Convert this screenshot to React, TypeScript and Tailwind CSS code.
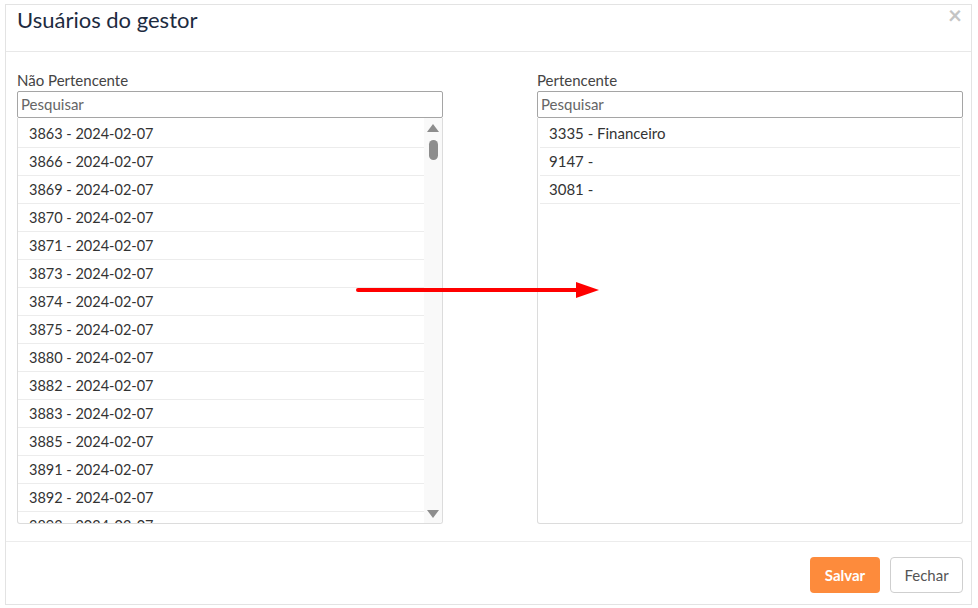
import React from "react";

const leftItems = [
  "3863 - 2024-02-07",
  "3866 - 2024-02-07",
  "3869 - 2024-02-07",
  "3870 - 2024-02-07",
  "3871 - 2024-02-07",
  "3873 - 2024-02-07",
  "3874 - 2024-02-07",
  "3875 - 2024-02-07",
  "3880 - 2024-02-07",
  "3882 - 2024-02-07",
  "3883 - 2024-02-07",
  "3885 - 2024-02-07",
  "3891 - 2024-02-07",
  "3892 - 2024-02-07",
  "3893 - 2024-02-07",
];

const rightItems = ["3335 - Financeiro", "9147 -", "3081 -"];

export default function App() {
  return (
    <div
      className="w-[978px] h-[608px] bg-white pt-[4px] pl-[5px]"
      style={{ fontFamily: "Lato, 'Open Sans', sans-serif" }}
    >
      <div className="relative w-[967px] h-[601px] border border-[#e3e3e3] flex flex-col">
        {/* Header */}
        <div className="h-[47px] border-b border-[#e8e8e8] pl-[11px] pr-[9px] flex items-start justify-between">
          <h1 className="text-[22px] leading-[26px] mt-[2px] text-[#1d2b3f]">Usuários do gestor</h1>
          <span className="text-[#c4c4c4] text-[24px] leading-[20px] font-bold mt-[0px]">×</span>
        </div>

        {/* Body */}
        <div className="h-[489px] pl-[11px] pr-[8px] pt-[19px] flex justify-between">
          {/* Left */}
          <div className="w-[426px] flex flex-col">
            <label className="text-[15px] leading-[18px] text-[#444]">Não Pertencente</label>
            <div className="h-[27px] mt-[2px] border border-[#a5a5a5] rounded-[2px] flex items-center px-[3px] text-[15px] text-[#666]">
              Pesquisar
            </div>
            <div className="h-[406px] border border-t-0 border-[#dcdcdc] rounded-b-[3px] flex overflow-hidden">
              <div className="flex-1 overflow-hidden pt-[2px]">
                {leftItems.map((t) => (
                  <div
                    key={t}
                    className="h-[28px] border-b border-[#ececec] pl-[11px] flex items-center text-[14.5px] text-[#333]"
                  >
                    {t}
                  </div>
                ))}
              </div>
              <div className="w-[18px] bg-[#f9f9f9] flex flex-col items-center justify-between pt-[6px] pb-[5px]">
                <div className="flex flex-col items-center">
                  <svg width="12" height="8" viewBox="0 0 12 8">
                    <polygon points="6,0 12,8 0,8" fill="#8d8d8d" />
                  </svg>
                  <div className="w-[9px] h-[20px] mt-[8px] rounded-full bg-[#8d8d8d]" />
                </div>
                <svg width="12" height="8" viewBox="0 0 12 8">
                  <polygon points="0,0 12,0 6,8" fill="#8d8d8d" />
                </svg>
              </div>
            </div>
          </div>

          {/* Right */}
          <div className="w-[426px] flex flex-col">
            <label className="text-[15px] leading-[18px] text-[#444]">Pertencente</label>
            <div className="h-[27px] mt-[2px] border border-[#a5a5a5] rounded-[2px] flex items-center px-[3px] text-[15px] text-[#666]">
              Pesquisar
            </div>
            <div className="h-[406px] border border-t-0 border-[#dcdcdc] rounded-b-[3px] pt-[2px] px-[2px]">
              {rightItems.map((t) => (
                <div
                  key={t}
                  className="h-[28px] border-b border-[#ececec] pl-[9px] flex items-center text-[15px] text-[#333]"
                >
                  {t}
                </div>
              ))}
            </div>
          </div>
        </div>

        {/* Footer */}
        <div className="flex-1 border-t border-[#ececec] pr-[8px] pt-[15px] flex justify-end items-start gap-[10px]">
          <button className="w-[70px] h-[36px] rounded-[4px] bg-[#fd8b3c] text-white font-bold text-[15px]">
            Salvar
          </button>
          <button className="w-[73px] h-[36px] rounded-[4px] border border-[#cfcfcf] bg-white text-[#555] text-[15px]">
            Fechar
          </button>
        </div>

        {/* Red arrow annotation */}
        <svg
          className="absolute left-[348px] top-[275px]"
          width="250"
          height="20"
          viewBox="0 0 250 20"
        >
          <line x1="4" y1="10" x2="225" y2="10" stroke="#ff0000" strokeWidth="4" strokeLinecap="round" />
          <polygon points="222,2 245,10 222,18" fill="#ff0000" />
        </svg>
      </div>
    </div>
  );
}
